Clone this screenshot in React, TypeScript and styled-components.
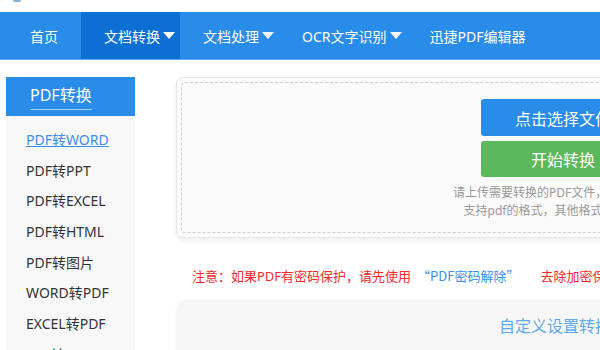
import React from "react";
import styled, { createGlobalStyle } from "styled-components";

const Global = createGlobalStyle`
  html, body {
    margin: 0;
    padding: 0;
    background: #ffffff;
    overflow: hidden;
    font-family: "Noto Sans", "Noto Sans CJK SC", sans-serif;
  }
`;

const Page = styled.div`
  width: 600px;
  height: 350px;
  overflow: hidden;
  display: flex;
  flex-direction: column;
`;

const TopStrip = styled.div`
  height: 12px;
  flex: none;
  position: relative;
`;

const LogoBit = styled.div`
  position: absolute;
  left: 13px;
  top: 0;
  width: 8px;
  height: 2px;
  border-radius: 0 0 2px 2px;
  background: #7fb2da;
`;

const Nav = styled.nav`
  height: 48px;
  flex: none;
  box-sizing: border-box;
  background: #2a8ce9;
  border-bottom: 1px solid #62acf1;
  display: flex;
  padding-left: 7px;
  min-width: 900px;
`;

const NavItem = styled.div<{ $active?: boolean; $drop?: boolean }>`
  display: flex;
  align-items: center;
  padding: 0 ${(p) => (p.$drop ? "5px" : "23px")} 0 23px;
  background: ${(p) => (p.$active ? "#0b6fd4" : "transparent")};
  color: #ffffff;
  font-size: 14px;
  white-space: nowrap;
`;

const Caret = styled.span`
  width: 0;
  height: 0;
  margin-left: 3px;
  border-left: 6px solid transparent;
  border-right: 6px solid transparent;
  border-top: 7px solid #ffffff;
`;

const Body = styled.div`
  display: flex;
  flex: none;
  margin-top: 17px;
  align-items: flex-start;
`;

const Sidebar = styled.aside`
  width: 129px;
  flex: none;
  margin-left: 6px;
  height: 300px;
  background: #f8f8f8;
  display: flex;
  flex-direction: column;
`;

const SideHeader = styled.div`
  flex: none;
  height: 39px;
  background: #2a8ce9;
  box-sizing: border-box;
  padding: 5px 0 0 24px;
`;

const SideTitle = styled.span`
  display: inline-block;
  color: #ffffff;
  font-size: 16px;
  line-height: 26px;
  padding-bottom: 1px;
  border-bottom: 1px solid #a8d0f6;
`;

const SideList = styled.ul`
  flex: none;
  list-style: none;
  margin: 0;
  padding: 9px 0 0 20px;
`;

const SideItem = styled.li<{ $active?: boolean }>`
  height: 30.7px;
  line-height: 30.7px;
  font-size: 14px;
  white-space: nowrap;
  color: ${(p) => (p.$active ? "#3d8fe8" : "#333333")};
  text-decoration: ${(p) => (p.$active ? "underline" : "none")};
`;

const Main = styled.main`
  margin-left: 41px;
  width: 774px;
  flex: none;
  display: flex;
  flex-direction: column;
`;

const UploadPanel = styled.div`
  flex: none;
  height: 161px;
  box-sizing: border-box;
  border: 1px solid #e6e6e6;
  border-radius: 7px;
  background: #fbfbfb;
  box-shadow: 0 2px 5px rgba(0, 0, 0, 0.08);
  padding: 4px;
  display: flex;
`;

const DropZone = styled.div`
  flex: 1;
  border: 1px dashed #cfcfcf;
  border-radius: 4px;
  display: flex;
  flex-direction: column;
  align-items: center;
  padding-top: 16px;
`;

const Button = styled.div<{ $color: string }>`
  flex: none;
  width: 164px;
  height: 37px;
  border-radius: 3px;
  background: ${(p) => p.$color};
  color: #ffffff;
  font-size: 16px;
  display: flex;
  align-items: center;
  justify-content: center;
  & + & {
    margin-top: 5px;
    height: 36px;
  }
`;

const Hint = styled.p`
  margin: 7px 0 0;
  font-size: 12px;
  line-height: 18px;
  color: #999999;
  text-align: center;
`;

const Notice = styled.p`
  flex: none;
  margin: 28px 0 0 16px;
  font-size: 13px;
  line-height: 20px;
  color: #f52a2a;
  white-space: nowrap;
`;

const NoticeLink = styled.span`
  font-family: "Noto Sans CJK SC", sans-serif;
  color: #3d8fe8;
  margin: 0 21px 0 6px;
`;

const SettingsPanel = styled.div`
  flex: none;
  margin-top: 14px;
  height: 80px;
  border-radius: 10px 10px 0 0;
  background: #f7f7f7;
  box-shadow: 0 0 4px rgba(0, 0, 0, 0.03);
  display: flex;
  justify-content: center;
  padding-top: 14px;
  box-sizing: border-box;
`;

const SettingsText = styled.span`
  font-size: 16px;
  line-height: 24px;
  color: #5eaaee;
`;

const navItems = [
  { label: "首页" },
  { label: "文档转换", drop: true, active: true },
  { label: "文档处理", drop: true },
  { label: "OCR文字识别", drop: true },
  { label: "迅捷PDF编辑器" },
];

const sideItems = [
  "PDF转WORD",
  "PDF转PPT",
  "PDF转EXCEL",
  "PDF转HTML",
  "PDF转图片",
  "WORD转PDF",
  "EXCEL转PDF",
  "PPT转PDF",
];

export default function App() {
  return (
    <Page>
      <Global />
      <TopStrip>
        <LogoBit />
      </TopStrip>
      <Nav>
        {navItems.map((n) => (
          <NavItem key={n.label} $active={n.active} $drop={n.drop}>
            {n.label}
            {n.drop && <Caret />}
          </NavItem>
        ))}
      </Nav>
      <Body>
        <Sidebar>
          <SideHeader>
            <SideTitle>PDF转换</SideTitle>
          </SideHeader>
          <SideList>
            {sideItems.map((s, i) => (
              <SideItem key={s} $active={i === 0}>
                {s}
              </SideItem>
            ))}
          </SideList>
        </Sidebar>
        <Main>
          <UploadPanel>
            <DropZone>
              <Button $color="#2a8ce9">点击选择文件</Button>
              <Button $color="#5cb85c">开始转换</Button>
              <Hint>
                请上传需要转换的PDF文件，最大支持2M
                <br />
                支持pdf的格式，其他格式暂不支持！
              </Hint>
            </DropZone>
          </UploadPanel>
          <Notice>
            注意：如果PDF有密码保护，请先使用
            <NoticeLink>“PDF密码解除”</NoticeLink>
            去除加密保护后再进行转换
          </Notice>
          <SettingsPanel>
            <SettingsText>自定义设置转换项</SettingsText>
          </SettingsPanel>
        </Main>
      </Body>
    </Page>
  );
}
